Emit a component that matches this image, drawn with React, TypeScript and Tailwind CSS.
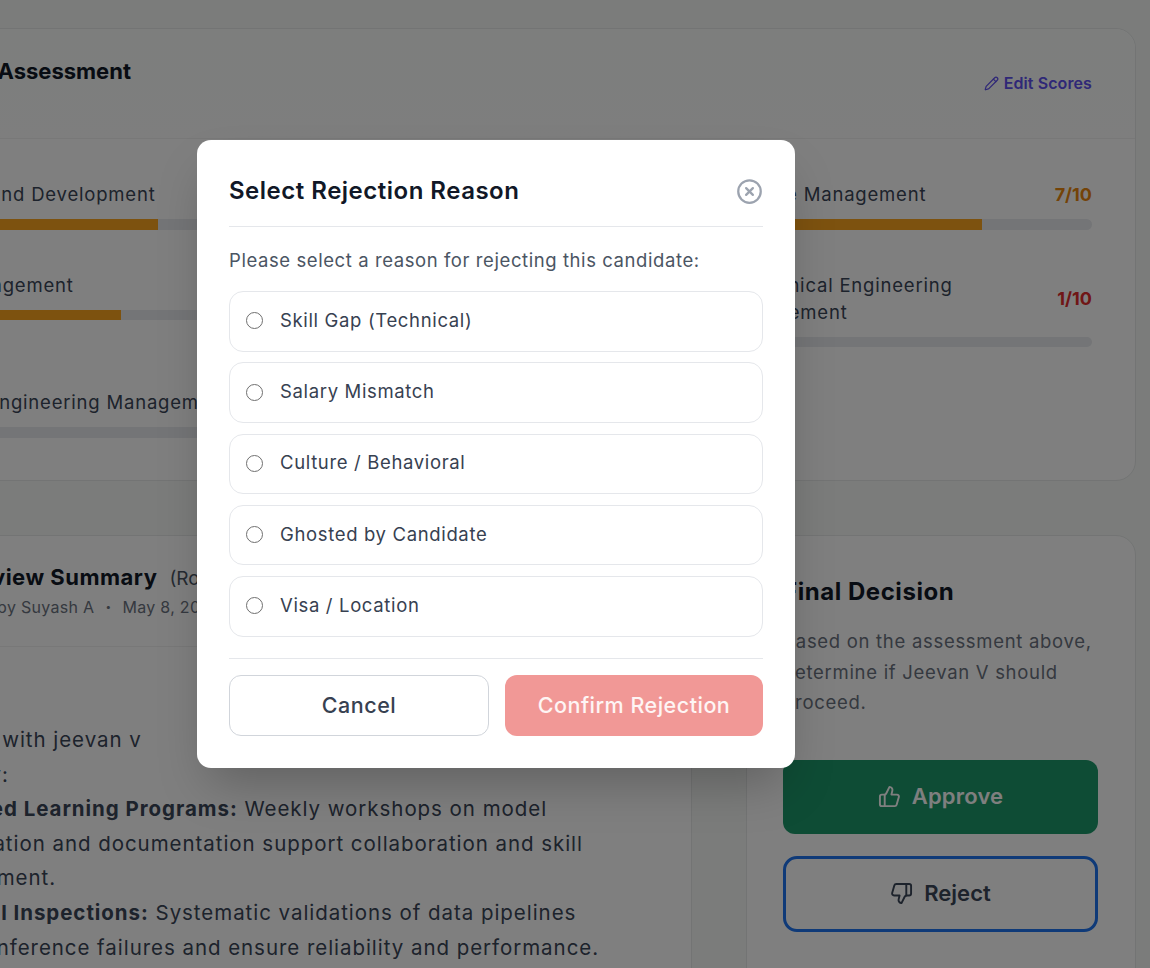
import React from "react";
import { CircleX, Pencil, ThumbsDown, ThumbsUp } from "lucide-react";

const amber = { tone: "text-[#e8860f]", bar: "bg-[#fba51f]" };
const red = { tone: "text-[#e02c2c]", bar: "bg-[#e02c2c]" };

const scores = [
  { label: "Learning and Development", score: "7/10", pct: 70, ...amber },
  { label: "Team Collaboration", score: "8/10", pct: 80, ...amber },
  { label: "Change Management", score: "7/10", pct: 70, ...amber },
  { label: "Task Management", score: "6/10", pct: 60, ...amber },
  { label: "Process Improvement", score: "6/10", pct: 60, ...amber },
  { label: "Mechanical Engineering Management", score: "1/10", pct: 0, wrap: true, ...red },
  { label: "Systems Engineering Management", score: "0/10", pct: 0, ...red },
];

const reasons = [
  "Skill Gap (Technical)",
  "Salary Mismatch",
  "Culture / Behavioral",
  "Ghosted by Candidate",
  "Visa / Location",
];

type Score = { label: string; score: string; pct: number; tone: string; bar: string; wrap?: boolean };

function ScoreRow({ label, score, pct, tone, bar, wrap }: Score) {
  return (
    <div>
      <div className="flex items-center justify-between gap-4 text-[18.5px] leading-[27px] text-[#3b4658] tracking-[0.8px]">
        <span className={wrap ? "max-w-[260px]" : "whitespace-nowrap"}>{label}</span>
        <span className={"font-bold tracking-normal text-[18px] " + tone}>{score}</span>
      </div>
      <div className="mt-[11px] h-[10.5px] rounded-full bg-[#e8eaee] overflow-hidden">
        <div className={"h-full " + bar} style={{ width: pct + "%" }} />
      </div>
    </div>
  );
}

export default function App() {
  return (
    <div className="relative h-[968px] overflow-hidden bg-[#f6f9f7] font-['Inter',sans-serif]">
      <div className="ml-[-142px] w-[1278px] pt-[28px] flex flex-col gap-[54px]">
        <section className="h-[453px] rounded-[20px] border border-[#e6e9e8] bg-white">
          <div className="h-[110px] flex justify-between border-b border-[#f0f1f1] pl-[42px] pr-[43px] rounded-t-[20px] bg-gradient-to-b from-[#fafdfb] to-[#fcfdfc]">
            <h2 className="ml-[-13px] mt-[27px] text-[22px] leading-[30px] font-bold text-[#111827] whitespace-nowrap">
              Technical Assessment
            </h2>
            <button className="mt-[43px] h-[22px] flex items-center gap-[5px] text-[16px] font-semibold tracking-[0.1px] text-[#5f50ee]">
              <Pencil className="h-[15px] w-[15px]" />
              Edit Scores
            </button>
          </div>
          <div className="grid grid-cols-3 gap-x-[45px] gap-y-[42px] pl-[42px] pr-[43px] pt-[42px]">
            {scores.map((s) => (
              <ScoreRow key={s.label} {...s} />
            ))}
          </div>
        </section>

        <div className="flex gap-[54px] items-start">
          <section className="w-[834px] h-[600px] rounded-[20px] border border-[#e6e9e8] bg-white shrink-0">
            <div className="h-[111px] border-b border-[#f0f1f1] pl-[42px] pt-[26px]">
              <div className="ml-[9px] flex items-baseline gap-[12px] whitespace-nowrap">
                <h3 className="text-[22px] leading-[30px] font-bold text-[#111827] tracking-[0.5px]">AI Interview Summary</h3>
                <span className="text-[19px] text-[#4b5563]">(Round 1)</span>
              </div>
              <div className="ml-[16px] mt-[1px] flex items-center gap-[11px] text-[16px] tracking-[0.3px] text-[#6b7280] whitespace-nowrap">
                <span>Reviewed by Suyash A</span>
                <span className="text-[10px]">•</span>
                <span>May 8, 2025</span>
              </div>
            </div>
            <div className="pl-[57px] pt-[76px] text-[20.5px] leading-[34.6px] text-[#3b4658] whitespace-nowrap tracking-[0.95px]">
              <p className="ml-[-18px]">Interview with jeevan v</p>
              <p className="ml-[-13px]">Summary:</p>
              <p className="ml-[-15px]"><strong className="font-bold">Structured Learning Programs:</strong> Weekly workshops on model</p>
              <p>optimization and documentation support collaboration and skill</p>
              <p className="ml-[-3px]">development.</p>
              <p className="ml-[12px]"><strong className="font-bold">Manual Inspections:</strong> Systematic validations of data pipelines</p>
              <p className="ml-[-12px]">prevent inference failures and ensure reliability and performance.</p>
            </div>
          </section>

          <section className="w-[390px] h-[500px] rounded-[20px] border border-[#e6e9e8] bg-white px-[36px] pt-[39px] shrink-0">
            <h3 className="text-[24px] leading-[34px] font-bold text-[#111827] tracking-[0.55px]">Final Decision</h3>
            <p className="mt-[17px] text-[18.5px] leading-[30.6px] text-[#6b7280] tracking-[0.7px]">
              Based on the assessment above, determine if Jeevan V should proceed.
            </p>
            <button className="mt-[42px] h-[74px] w-[315px] flex items-center justify-center gap-[11px] rounded-[12px] bg-[#1c986a] text-[22px] font-semibold tracking-[0.2px] text-white">
              <ThumbsUp className="h-[23px] w-[23px]" />
              Approve
            </button>
            <button className="mt-[22px] h-[76px] w-[315px] flex items-center justify-center gap-[11px] rounded-[14px] border-[3px] border-[#1e74f0] text-[22px] font-semibold text-[#3b4658]">
              <ThumbsDown className="h-[23px] w-[23px]" />
              Reject
            </button>
          </section>
        </div>
      </div>

      <div className="absolute inset-0 bg-black/50" />

      <div className="absolute left-[197px] top-[140px] w-[598px] h-[628px] rounded-[14px] bg-white px-[32px] shadow-2xl">
        <div className="h-[87px] flex items-center justify-between border-b border-[#e5e7eb] pt-[16px]">
          <h2 className="text-[24px] font-semibold text-[#111827] tracking-[0.5px]">Select Rejection Reason</h2>
          <CircleX className="h-[27px] w-[27px] text-[#9ca3af]" />
        </div>
        <p className="mt-[20px] text-[18.5px] leading-[27px] text-[#4b5563] tracking-[0.58px]">
          Please select a reason for rejecting this candidate:
        </p>
        <div className="mt-[17px] flex flex-col gap-[10.75px]">
          {reasons.map((r) => (
            <label key={r} className="h-[60.5px] flex items-center gap-[17px] rounded-[14px] border border-[#e5e7eb] pl-[16px] pb-[1px]">
              <span className="h-[17px] w-[17px] rounded-full border-[1.5px] border-[#6f6f6f]" />
              <span className="text-[18.5px] text-[#374151] tracking-[0.65px]">{r}</span>
            </label>
          ))}
        </div>
        <div className="mt-[21.5px] flex gap-[16px] border-t border-[#e5e7eb] pt-[16px]">
          <button className="h-[61px] w-[260px] rounded-[12px] border border-[#d1d5db] text-[21.5px] font-medium tracking-[0.5px] text-[#374151]">
            Cancel
          </button>
          <button className="h-[61px] w-[258px] rounded-[12px] bg-[#f19896] text-[21.5px] font-medium tracking-[0.5px] text-white/90">
            Confirm Rejection
          </button>
        </div>
      </div>
    </div>
  );
}
